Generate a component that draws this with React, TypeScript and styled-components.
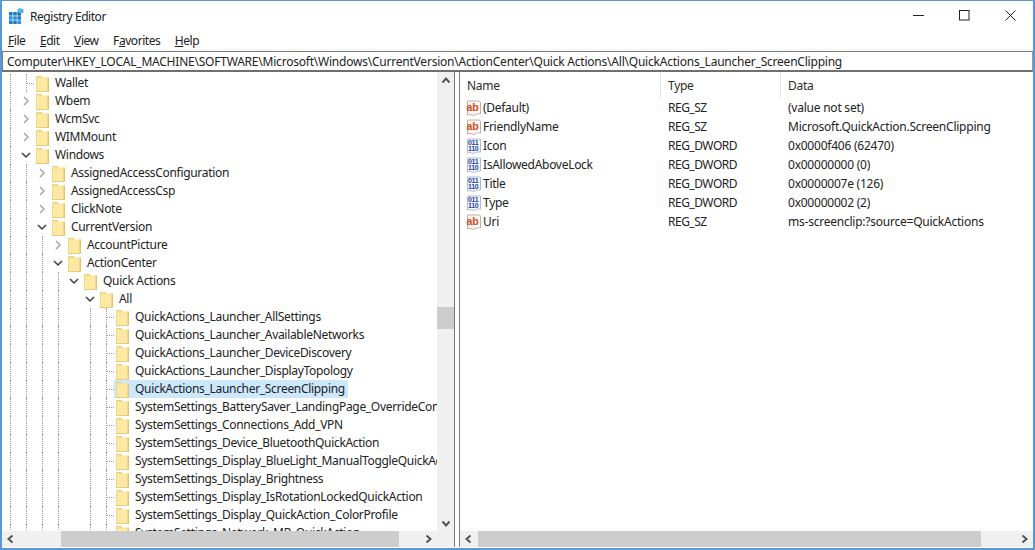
import React from "react";
import styled, { createGlobalStyle } from "styled-components";

const Global = createGlobalStyle`
  html, body { margin: 0; padding: 0; background: #fff; }
  body { font-family: "Noto Sans", "Open Sans", sans-serif; font-size: 12px; color: #1a1a1a; }
`;

const Window = styled.div`
  width: 1035px; height: 550px; box-sizing: border-box; overflow: hidden;
  border: 2px solid #5a97d3; border-top-width: 1px; border-right-width: 2px;
  display: flex; flex-direction: column; background: #fff;
`;
const TitleBar = styled.div`
  height: 30px; flex: none; display: flex; align-items: center; padding-left: 7px;
`;
const TitleText = styled.span`
  margin-left: 6px; font-size: 12px; letter-spacing: -0.45px; color: #222;
`;
const WindowControls = styled.div`
  margin-left: auto; display: flex; height: 30px;
`;
const ControlButton = styled.div`
  width: 46px; display: flex; align-items: center; justify-content: center; margin-top: -2px;
`;
const MenuBar = styled.div`
  height: 20px; box-sizing: border-box; padding: 0 0 2px 6px; flex: none; display: flex; align-items: center; gap: 14.5px;
  background: linear-gradient(#fff 17px, #f3f3f3);
`;
const MenuItem = styled.span`
  font-size: 12px; letter-spacing: -0.45px; color: #222;
`;
const Accel = styled.u`
  text-underline-offset: 1px;
`;
const AddressBar = styled.div`
  height: 21px; flex: none; box-sizing: border-box; display: flex; align-items: center;
  border: 1px solid #7d7d7d; border-bottom: 2px solid #6f6f6f; border-right-color: #9a9a9a;
  padding-left: 4px; font-size: 12px; letter-spacing: -0.22px; white-space: nowrap; color: #222;
`;
const Panes = styled.div`
  flex: 1; min-height: 0; display: flex; padding-bottom: 1px;
`;
const TreePane = styled.div`
  width: 452px; flex: none; display: grid;
  grid-template-columns: 435px 17px; grid-template-rows: 1fr 16px;
  border-right: 1px solid #7a7a7a; min-height: 0;
`;
const Splitter = styled.div`
  width: 4px; flex: none; background: #fff;
`;
const ListPane = styled.div`
  flex: 1; min-width: 0; display: flex; flex-direction: column; border-left: 1px solid #7a7a7a;
`;
const TreeScroll = styled.div`
  overflow: hidden; padding-top: 2px; min-height: 0;
`;
const Row = styled.div`
  height: 18px; display: flex; white-space: nowrap;
`;
const Guide = styled.div<{ $line?: boolean; $stub?: boolean }>`
  width: 16px; flex: none; position: relative;
  &::before {
    content: ""; display: ${(p) => (p.$line ? "block" : "none")};
    position: absolute; left: 8px; top: 0; bottom: 0;
    border-left: 1px dotted #9c9c9c;
  }
  &::after {
    content: ""; display: ${(p) => (p.$stub ? "block" : "none")};
    position: absolute; left: 9px; right: 0; top: 9px; border-top: 1px dotted #9c9c9c;
  }
`;
const Expander = styled.div`
  width: 16px; flex: none; display: flex; align-items: center; justify-content: center; padding-right: 1px; box-sizing: border-box;
`;
const NodeLabel = styled.div<{ $selected?: boolean }>`
  display: flex; align-items: center; height: 18px;
  padding-right: 3px;
  background: ${(p) => (p.$selected ? "#cce8ff" : "transparent")};
`;
const FolderBox = styled.span`
  display: flex; width: 18px; padding-left: 2px;
`;
const NodeText = styled.span`
  margin-left: 1px; font-size: 12px; letter-spacing: -0.315px; color: #222; line-height: 18px;
`;
const VScroll = styled.div`
  background: #f0f0f0; display: flex; flex-direction: column; align-items: center; min-height: 0;
`;
const ArrowBox = styled.div<{ $end?: boolean }>`
  height: 17px; width: 100%; flex: none; display: flex; align-items: center; justify-content: center;
  margin-top: ${(p) => (p.$end ? "auto" : "0")};
`;
const VThumb = styled.div<{ $top: number; $h: number }>`
  width: 100%; height: ${(p) => p.$h}px; margin-top: ${(p) => p.$top}px; background: #cdcdcd; flex: none;
`;
const HScroll = styled.div`
  background: #f0f0f0; display: flex; align-items: center; height: 16px;
`;
const HArrow = styled.div<{ $w: number; $align: string }>`
  width: ${(p) => p.$w}px; flex: none; height: 16px; display: flex; align-items: center; box-sizing: border-box;
  justify-content: ${(p) => p.$align}; padding: 0 4px;
`;
const HThumb = styled.div`
  flex: 1; height: 16px; background: #cdcdcd;
`;
const Corner = styled.div`
  background: #f0f0f0;
`;
const ListBody = styled.div`
  flex: 1; min-height: 0; overflow: hidden;
`;
const HeaderRow = styled.div`
  display: grid; grid-template-columns: 200px 120px 1fr; height: 26px; align-items: center;
`;
const HeaderCell = styled.div<{ $pad: number; $div?: boolean }>`
  height: 26px; line-height: 28px; padding-left: ${(p) => p.$pad}px;
  border-left: ${(p) => (p.$div ? "1px solid #e6e6e6" : "none")};
  font-size: 12px; letter-spacing: -0.3px; color: #2c2c2c;
`;
const ValueRow = styled.div`
  display: grid; grid-template-columns: 200px 120px 1fr; height: 19px; align-items: center;
  font-size: 12px; color: #222; white-space: nowrap;
`;
const NameCell = styled.div`
  display: flex; align-items: center; padding-left: 6px; letter-spacing: -0.29px;
`;
const NameText = styled.span`
  margin-left: 1px;
`;
const TypeCell = styled.div`
  padding-left: 8px; letter-spacing: -0.5px;
`;
const DataCell = styled.div`
  padding-left: 8px; letter-spacing: -0.235px;
`;

const Chevron = ({ open, dark }: { open?: boolean; dark?: boolean }) => (
  <svg width="10" height="10" viewBox="0 0 10 10" fill="none">
    <path
      d={open ? "M1 3l4 4 4-4" : "M3 1l4 4-4 4"}
      stroke={dark ? "#3f3f3f" : "#a8a8a8"}
      strokeWidth="1.5"
    />
  </svg>
);

const ScrollChevron = ({ dir }: { dir: "l" | "r" | "u" | "d" }) => {
  const d = { l: "M6.5 1.5L2.5 5l4 3.5", r: "M3.5 1.5L7.5 5l-4 3.5", u: "M1.5 6.5L5 2.5l3.5 4", d: "M1.5 3.5L5 7.5l3.5-4" }[dir];
  return (
    <svg width="10" height="10" viewBox="0 0 10 10" fill="none">
      <path d={d} stroke="#555" strokeWidth="2" />
    </svg>
  );
};

const Folder = () => (
  <svg width="13" height="17" viewBox="0 0 13 17">
    <path d="M0.5 1.5h5.5l1 1h5.5v13.5h-12z" fill="#fbe49a" />
    <path d="M0.5 4h12v12l-12 0z" fill="#fde8a4" />
    <path d="M11.5 2.5h1.5v14h-1.5z" fill="#e6c46c" />
    <path d="M0 16h13v1H0z" fill="#e9cb7c" />
    <path d="M0 1h6v1H0z" fill="#eccd7a" />
    <path d="M0 1h1v15H0z" fill="#f1d88c" />
  </svg>
);

const AppIcon = () => (
  <svg width="15" height="16" viewBox="0 0 15 16">
    <g fill="#1f7fc4">
      <rect x="0" y="4" width="3.6" height="3.6" />
      <rect x="4.2" y="4" width="3.6" height="3.6" />
      <rect x="0" y="8.2" width="3.6" height="3.6" fill="#2b95d6" />
      <rect x="4.2" y="8.2" width="3.6" height="3.6" fill="#2b95d6" />
      <rect x="8.4" y="8.2" width="3.6" height="3.6" />
      <rect x="0" y="12.4" width="3.6" height="3.6" />
      <rect x="4.2" y="12.4" width="3.6" height="3.6" />
      <rect x="8.4" y="12.4" width="3.6" height="3.6" fill="#2b95d6" />
      <rect x="8.4" y="4" width="3.6" height="3.6" fill="#135f9c" />
    </g>
    <path d="M10.5 0l4 1.2v3.2l-3 1.6-3-1.4V1.4z" fill="#4fb4e8" />
  </svg>
);

const ICON_FONT = '"Liberation Sans", sans-serif';

const StringIcon = () => (
  <svg width="16" height="16" viewBox="0 0 16 16">
    <path d="M1.5 1h11.5c1 0 1.5 1 1.5 2v11c-3 -1.5 -5 1.8 -8 1.2 -2 -.4 -3 -1 -5 -.2z" fill="#fdf6f2" stroke="#c4aea4" />
    <text x="0.6" y="11" fontSize="10.5" fontWeight="700" fill="#d2491f" fontFamily={ICON_FONT}>ab</text>
  </svg>
);

const BinaryIcon = () => (
  <svg width="16" height="16" viewBox="0 0 16 16">
    <path d="M1.5 1h13v13c-3 -1 -5 2 -8 1.2 -2 -.4 -3 -1 -5 -.2z" fill="#f6f8fd" stroke="#b0b9cf" />
    <text x="2" y="7" fontSize="7" fontWeight="700" fill="#2343a8" fontFamily={ICON_FONT}>011</text>
    <text x="2" y="13.2" fontSize="7" fontWeight="700" fill="#2343a8" fontFamily={ICON_FONT}>110</text>
  </svg>
);

type Node = { depth: number; label: string; exp?: "open" | "closed"; selected?: boolean };

const Q = "QuickActions_Launcher_";
const S = "SystemSettings_";
const nodes: Node[] = [
  { depth: 1, label: "Wallet" },
  { depth: 1, label: "Wbem", exp: "closed" },
  { depth: 1, label: "WcmSvc", exp: "closed" },
  { depth: 1, label: "WIMMount", exp: "closed" },
  { depth: 1, label: "Windows", exp: "open" },
  { depth: 2, label: "AssignedAccessConfiguration", exp: "closed" },
  { depth: 2, label: "AssignedAccessCsp", exp: "closed" },
  { depth: 2, label: "ClickNote", exp: "closed" },
  { depth: 2, label: "CurrentVersion", exp: "open" },
  { depth: 3, label: "AccountPicture", exp: "closed" },
  { depth: 3, label: "ActionCenter", exp: "open" },
  { depth: 4, label: "Quick Actions", exp: "open" },
  { depth: 5, label: "All", exp: "open" },
  { depth: 6, label: Q + "AllSettings" },
  { depth: 6, label: Q + "AvailableNetworks" },
  { depth: 6, label: Q + "DeviceDiscovery" },
  { depth: 6, label: Q + "DisplayTopology" },
  { depth: 6, label: Q + "ScreenClipping", selected: true },
  { depth: 6, label: S + "BatterySaver_LandingPage_OverrideControl" },
  { depth: 6, label: S + "Connections_Add_VPN" },
  { depth: 6, label: S + "Device_BluetoothQuickAction" },
  { depth: 6, label: S + "Display_BlueLight_ManualToggleQuickAction" },
  { depth: 6, label: S + "Display_Brightness" },
  { depth: 6, label: S + "Display_IsRotationLockedQuickAction" },
  { depth: 6, label: S + "Display_QuickAction_ColorProfile" },
  { depth: 6, label: S + "Network_MR_QuickAction" },
];

const values = [
  { icon: "s", name: "(Default)", type: "REG_SZ", data: "(value not set)" },
  { icon: "s", name: "FriendlyName", type: "REG_SZ", data: "Microsoft.QuickAction.ScreenClipping" },
  { icon: "b", name: "Icon", type: "REG_DWORD", data: "0x0000f406 (62470)" },
  { icon: "b", name: "IsAllowedAboveLock", type: "REG_DWORD", data: "0x00000000 (0)" },
  { icon: "b", name: "Title", type: "REG_DWORD", data: "0x0000007e (126)" },
  { icon: "b", name: "Type", type: "REG_DWORD", data: "0x00000002 (2)" },
  { icon: "s", name: "Uri", type: "REG_SZ", data: "ms-screenclip:?source=QuickActions" },
];

const TreeRow = ({ node }: { node: Node }) => {
  const cells = [];
  for (let i = 0; i < node.depth; i++) {
    cells.push(<Guide key={i} $line={i !== 4} />);
  }
  return (
    <Row>
      {cells}
      {node.exp ? (
        <Expander>
          <Chevron open={node.exp === "open"} dark={node.exp === "open"} />
        </Expander>
      ) : (
        <Guide $line $stub />
      )}
      <NodeLabel $selected={node.selected}>
        <FolderBox>
          <Folder />
        </FolderBox>
        <NodeText>{node.label}</NodeText>
      </NodeLabel>
    </Row>
  );
};

export default function App() {
  return (
    <>
      <Global />
      <Window>
        <TitleBar>
          <AppIcon />
          <TitleText>Registry Editor</TitleText>
          <WindowControls>
            <ControlButton>
              <svg width="11" height="11" viewBox="0 0 11 11"><path d="M0 5.5h11" stroke="#222" /></svg>
            </ControlButton>
            <ControlButton>
              <svg width="11" height="11" viewBox="0 0 11 11"><rect x=".5" y=".5" width="9.5" height="9.5" fill="none" stroke="#222" /></svg>
            </ControlButton>
            <ControlButton>
              <svg width="11" height="11" viewBox="0 0 11 11"><path d="M.5.5l10 10M10.5.5l-10 10" stroke="#222" /></svg>
            </ControlButton>
          </WindowControls>
        </TitleBar>
        <MenuBar>
          <MenuItem><Accel>F</Accel>ile</MenuItem>
          <MenuItem><Accel>E</Accel>dit</MenuItem>
          <MenuItem><Accel>V</Accel>iew</MenuItem>
          <MenuItem>F<Accel>a</Accel>vorites</MenuItem>
          <MenuItem><Accel>H</Accel>elp</MenuItem>
        </MenuBar>
        <AddressBar>
          Computer\HKEY_LOCAL_MACHINE\SOFTWARE\Microsoft\Windows\CurrentVersion\ActionCenter\Quick Actions\All\QuickActions_Launcher_ScreenClipping
        </AddressBar>
        <Panes>
          <TreePane>
            <TreeScroll>
              {nodes.map((n) => (
                <TreeRow key={n.label} node={n} />
              ))}
            </TreeScroll>
            <VScroll>
              <ArrowBox><ScrollChevron dir="u" /></ArrowBox>
              <VThumb $top={218} $h={22} />
              <ArrowBox $end><ScrollChevron dir="d" /></ArrowBox>
            </VScroll>
            <HScroll>
              <HArrow $w={59} $align="flex-start"><ScrollChevron dir="l" /></HArrow>
              <HThumb />
              <HArrow $w={38} $align="flex-end"><ScrollChevron dir="r" /></HArrow>
            </HScroll>
            <Corner />
          </TreePane>
          <Splitter />
          <ListPane>
            <ListBody>
              <HeaderRow>
                <HeaderCell $pad={7}>Name</HeaderCell>
                <HeaderCell $pad={7} $div>Type</HeaderCell>
                <HeaderCell $pad={7} $div>Data</HeaderCell>
              </HeaderRow>
              {values.map((v) => (
                <ValueRow key={v.name}>
                  <NameCell>
                    {v.icon === "s" ? <StringIcon /> : <BinaryIcon />}
                    <NameText>{v.name}</NameText>
                  </NameCell>
                  <TypeCell>{v.type}</TypeCell>
                  <DataCell>{v.data}</DataCell>
                </ValueRow>
              ))}
            </ListBody>
            <HScroll>
              <HArrow $w={18} $align="flex-end"><ScrollChevron dir="l" /></HArrow>
              <HThumb />
              <HArrow $w={52} $align="flex-end"><ScrollChevron dir="r" /></HArrow>
            </HScroll>
          </ListPane>
        </Panes>
      </Window>
    </>
  );
}
